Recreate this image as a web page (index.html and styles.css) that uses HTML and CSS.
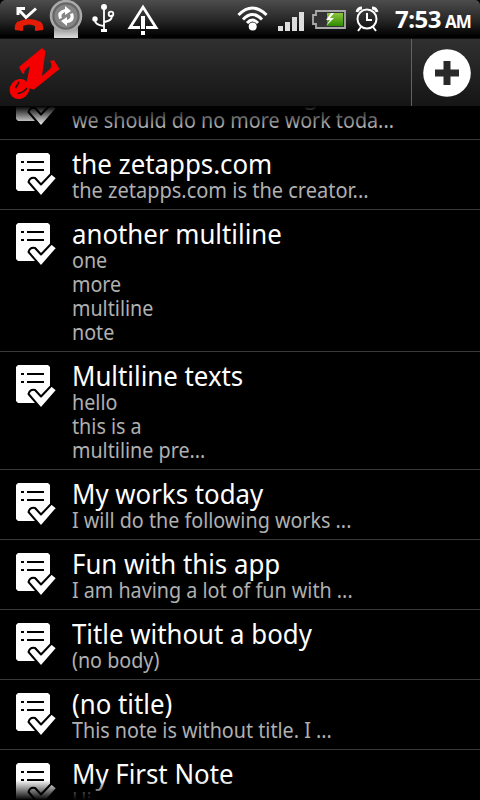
FILE: index.html
```html
<!DOCTYPE html>
<html lang="en">
<head>
<meta charset="utf-8">
<title>Notes</title>
<link rel="stylesheet" href="styles.css">
</head>
<body>
<svg class="defs" aria-hidden="true">
  <symbol id="note" viewBox="0 0 40 42">
    <path fill="#fff" d="M2 0H32L34 2V23L25 31L20 25Q16 22 13 27L20 38H2L0 36V2Z"/>
    <path stroke="#000" stroke-width="2" d="M5 9H8M11 9H28M5 17H8M11 17H28"/>
    <path fill="#fff" stroke="#000" stroke-width="2" stroke-linejoin="round" d="M12.500 29Q14 24 19 25L25 31.500L35.500 20.500L41 25L25 43.500Z"/>
  </symbol>
</svg>
<div class="phone">
  <header class="status">
    <svg class="status-left" width="160" height="38" viewBox="0 0 160 38">
      <defs><linearGradient id="silver" x2="0" y2="1"><stop stop-color="#888"/><stop offset="1" stop-color="#ddd"/></linearGradient></defs>
      <path d="M0 0H4Q1 1 0 4Z" fill="#000"/>
      <path d="M15 30Q14 25 17 22Q29 16 41 22Q44 25 43 30L35 31V26Q29 23 23 26V31Z" fill="#e41b06"/>
      <path d="M18 15V8.500H25M19 10L26 17.500L36 8.500" fill="none" stroke="#fff" stroke-width="3"/>
      <path d="M54 38V26H78V38Z" fill="url(#silver)"/>
      <circle cx="66" cy="16" r="15" fill="#666" stroke="#aaa" stroke-width="2.500"/>
      <circle cx="66" cy="16" r="11.500" fill="#858585"/>
      <path d="M59 19Q56 11 65 9V6L71 11L65 15V12Q60 14 62 18ZM73 13Q76 22 67 23V26L61 21L67 17V20Q72 18 70 14Z" fill="#fff"/>
      <g fill="none" stroke="#fff" stroke-width="1.800"><path d="M104 7V30M95 20Q95 25 104 26M111 15Q114 20 104 22"/><circle cx="111" cy="14" r="2.300"/></g>
      <circle cx="104" cy="7" r="3" fill="#fff"/><circle cx="95" cy="19" r="2.700" fill="#fff"/><path d="M101 29H107V32H101Z" fill="#fff"/>
      <path d="M140 27.500H130L143 7L156 27.500H146" fill="none" stroke="#fff" stroke-width="2.800"/>
      <path d="M141 16H145V29H141ZM141 31H145V35H141Z" fill="#fff"/>
    </svg>
    <svg class="status-right" width="160" height="38" viewBox="0 0 160 38">
      <defs><linearGradient id="green" x2="0" y2="1"><stop stop-color="#8cc63c"/><stop offset="1" stop-color="#2e8b00"/></linearGradient></defs>
      <g fill="none" stroke="#fff" stroke-width="3"><path d="M8.500 15Q22.500 1 36.500 15M13 19.500Q22.500 9.500 32 19.500M17 23Q22.500 17 28 23"/></g>
      <circle cx="22.700" cy="26.500" r="4" fill="#fff"/>
      <path d="M48 26H53V31H48ZM55 22H60V31H55ZM62 17H67V31H62ZM69 12H74V31H69Z" fill="#ddd"/>
      <path d="M86 11H115V28H86V24H83V15H86Z" fill="#333" stroke="#aaa" stroke-width="1.800"/>
      <path d="M97 13H113V26H97Z" fill="url(#green)"/><path d="M101 13L96 20H100L96 26L104 18H100L104 13Z" fill="#fff"/>
      <g fill="none" stroke="#fff" stroke-width="2"><circle cx="137" cy="19" r="9.500"/><path d="M137 13V20H142M131 27L128 31M143 27L146 31"/><path d="M127 12Q128 8 132 8M147 12Q146 8 142 8" stroke-width="3"/></g>
    </svg>
    <div class="clock"><span class="time">7:53</span><span class="ampm">AM</span></div>
  </header>
  <div class="bar">
    <svg class="logo" width="80" height="67" viewBox="0 39 80 67">
      <ellipse cx="19.500" cy="89" rx="10.500" ry="9.500" transform="rotate(-50 19.500 89)" fill="#f50000"/>
      <path d="M15.500 88L19 82M17.500 93.500Q23 93 27 88" fill="none" stroke="#251616" stroke-width="1.600"/>
      <path d="M19 67L42 48L45.500 51L42 76L50 69Q53 66 50 61L54 60L59.500 69L34 89.500L28 88L26 85L30 66L27 68Q24.500 70 24 74L22 73Z" fill="#f50000"/>
    </svg>
    <div class="add"><svg width="68" height="67" viewBox="412 39 68 67"><circle cx="447" cy="73" r="23.800" fill="#fff"/><path d="M447 61V85M435 73H459" stroke="#292929" stroke-width="7"/></svg></div>
  </div>
  <main class="list">
    <article class="row first"><svg class="icon"><use href="#note"/></svg><div><h2>We must do nothing</h2><p>we should do no more work toda...</p></div></article>
    <article class="row"><svg class="icon"><use href="#note"/></svg><div><h2>the zetapps.com</h2><p class="wide">the zetapps.com is the creator...</p></div></article>
    <article class="row"><svg class="icon"><use href="#note"/></svg><div><h2>another multiline</h2><p>one<br>more<br>multiline<br>note</p></div></article>
    <article class="row"><svg class="icon"><use href="#note"/></svg><div><h2>Multiline texts</h2><p>hello<br>this is a<br>multiline pre...</p></div></article>
    <article class="row"><svg class="icon"><use href="#note"/></svg><div><h2>My works today</h2><p>I will do the following works ...</p></div></article>
    <article class="row"><svg class="icon"><use href="#note"/></svg><div><h2>Fun with this app</h2><p>I am having a lot of fun with ...</p></div></article>
    <article class="row"><svg class="icon"><use href="#note"/></svg><div><h2>Title without a body</h2><p>(no body)</p></div></article>
    <article class="row"><svg class="icon"><use href="#note"/></svg><div><h2>(no title)</h2><p>This note is without title. I ...</p></div></article>
    <article class="row"><svg class="icon"><use href="#note"/></svg><div><h2>My First Note</h2><p>Hi</p></div></article>
  </main>
</div>
</body>
</html>
```
FILE: styles.css
```css
* { box-sizing: border-box; }
body { margin: 0; background: #000; font-family: "Noto Sans", sans-serif; }
.defs { position: absolute; width: 0; height: 0; }
.phone { width: 480px; height: 800px; overflow: hidden; display: flex; flex-direction: column; background: #000; }
.status { height: 38px; flex: none; display: flex; background: linear-gradient(#4d4d4d, #292929 50%, #000 96%); border-radius: 5px 5px 0 0; }
.status svg { flex: none; }
.status-right { margin-left: 70px; }
.clock { flex: none; margin-left: 5px; display: flex; align-items: baseline; color: #fff; font-weight: 700; white-space: nowrap; line-height: 38px; }
.time { font-size: 24px; letter-spacing: -0.5px; }
.ampm { font-size: 17px; margin-left: 4px; letter-spacing: -1px; }
.bar { height: 68px; flex: none; display: flex; justify-content: space-between; background: linear-gradient(#303030, #151515); border-top: 1px solid #111; }
.add { border-left: 1px solid #626262; width: 69px; }
.add svg, .logo { display: block; }
.list { position: relative; flex: 1; min-height: 0; overflow: hidden; }
.list::before, .list::after { content: ""; position: absolute; left: 0; right: 0; height: 20px; z-index: 1; }
.list::before { top: 0; background: linear-gradient(#000, transparent); }
.list::after { bottom: 0; background: linear-gradient(transparent, #000); }
.row { display: flex; gap: 16px; padding: 9px 0 7px 16px; border-bottom: 1px solid #393939; }
.row.first { margin-top: -36px; }
.row.first h2 { margin-top: -1px; margin-bottom: 1px; }
.icon { width: 40px; height: 42px; flex: none; margin-top: 4px; overflow: visible; }
.row div { white-space: nowrap; height: max-content; }
h2, p { margin: 0; font-weight: 400; transform-origin: 0 0; width: max-content; }
h2 { color: #fff; font-size: 27px; line-height: 29px; transform: scaleX(.956); }
p { color: #b0b0b0; font-size: 21px; line-height: 24px; transform: scaleX(.939); }
p.wide { transform: scaleX(.952); }
```
